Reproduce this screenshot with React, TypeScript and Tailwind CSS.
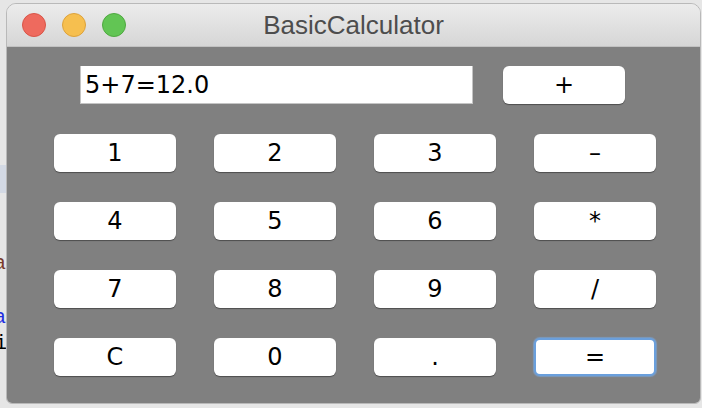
import React from "react";

const keys = ["1", "2", "3", "–", "4", "5", "6", "*", "7", "8", "9", "/", "C", "0", ".", "="];

export default function App() {
  return (
    <div className="relative w-[702px] h-[408px] overflow-hidden bg-[#e6e6e6]">
      {/* desktop / background app fragments */}
      <div className="absolute left-0 top-[165px] w-[8px] h-[28px] bg-[#d3d9e4]" />
      <span className="absolute left-[-6px] top-[252px] text-[20px] leading-[24px] text-[#7a3b2a]" style={{ fontFamily: '"Liberation Mono", monospace' }}>a</span>
      <span className="absolute left-[-6px] top-[306px] text-[20px] leading-[24px] text-[#1f2fe0]" style={{ fontFamily: '"Liberation Mono", monospace' }}>a</span>
      <span className="absolute left-[-5px] top-[332px] text-[20px] leading-[24px] text-black" style={{ fontFamily: '"Liberation Mono", monospace' }}>i</span>

      {/* window */}
      <div className="absolute left-[6px] top-[3px] w-[695px] h-[401px] rounded-t-[10px] rounded-b-[6px] overflow-hidden border border-[#b9b9b9] flex flex-col">
        <div className="relative h-[43px] shrink-0 bg-gradient-to-b from-[#ececec] to-[#d6d6d6] border-b border-[#c2c2c2] flex items-center">
          <div className="flex items-center gap-[16px] pl-[15px]">
            <div className="w-[24px] h-[24px] rounded-full bg-[#ee6a5e] border border-[#d85548]" />
            <div className="w-[24px] h-[24px] rounded-full bg-[#f6bf4f] border border-[#dca23c]" />
            <div className="w-[24px] h-[24px] rounded-full bg-[#62c554] border border-[#4fa840]" />
          </div>
          <div
            className="absolute inset-0 flex items-center justify-center text-[26px] text-[#4d4d4d]"
            style={{ fontFamily: '"Liberation Sans", Arial, sans-serif' }}
          >
            BasicCalculator
          </div>
        </div>
        <div className="flex-1 bg-[#808080]" style={{ fontFamily: '"DejaVu Sans", sans-serif' }}>
          <div className="flex pl-[73px] pt-[19px]">
            <div className="w-[393px] h-[38px] bg-white border-l border-r border-b border-[#c4c4c4] border-t-[#e0e0e0] flex items-center pl-[4px] text-[24px] text-black">
              5+7=12.0
            </div>
            <button className="ml-[30px] w-[122px] h-[38px] bg-white rounded-[6px] shadow-[0_1px_1px_rgba(0,0,0,0.4)] text-[24px] text-black flex items-center justify-center">
              +
            </button>
          </div>
          <div className="grid grid-cols-[122px_122px_122px_122px] gap-x-[38px] gap-y-[30px] pl-[47px] mt-[30px]">
            {keys.map((k) =>
              k === "=" ? (
                <button
                  key={k}
                  className="h-[38px] bg-white rounded-[6px] border-[2px] border-[#6a9fdc] shadow-[0_0_1px_1px_rgba(120,170,230,0.6)] text-[24px] text-black flex items-center justify-center"
                >
                  {k}
                </button>
              ) : (
                <button
                  key={k}
                  className="h-[38px] bg-white rounded-[6px] shadow-[0_1px_1px_rgba(0,0,0,0.4)] text-[24px] text-black flex items-center justify-center"
                >
                  {k}
                </button>
              )
            )}
          </div>
        </div>
      </div>
    </div>
  );
}
